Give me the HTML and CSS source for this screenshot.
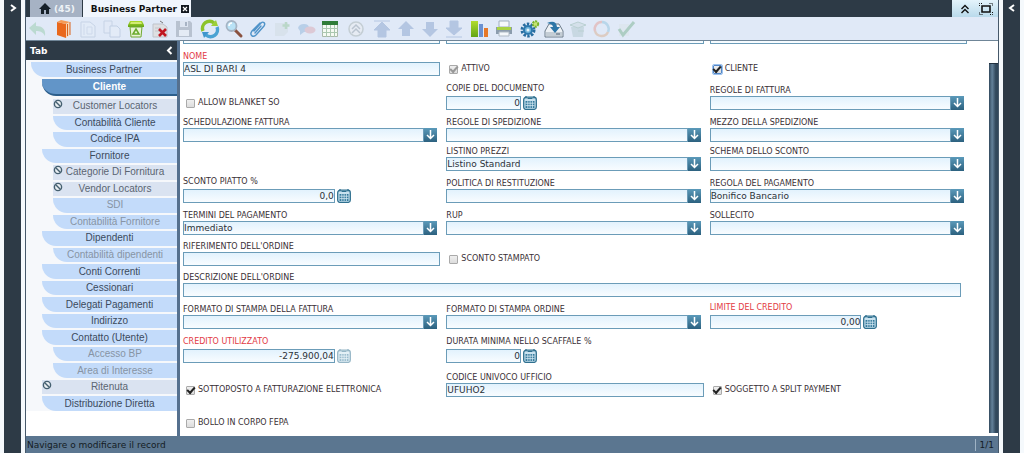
FILE: index.html
```html
<!DOCTYPE html>
<html lang="it">
<head>
<meta charset="utf-8">
<title>Business Partner</title>
<link rel="stylesheet" href="styles.css">
</head>
<body>
<svg class="defs" aria-hidden="true">
  <defs>
    <linearGradient id="green" x1="0" y1="0" x2="0" y2="1"><stop offset="0" stop-color="#b2dc2e"/><stop offset="1" stop-color="#62a516"/></linearGradient>
    <symbol id="down" viewBox="0 0 13 13"><path d="M6.500 2v8.500M3 7l3.500 3.500L10 7" fill="none" stroke="#fff" stroke-width="1.500"/></symbol>
    <symbol id="calc" viewBox="0 0 14 14"><rect x=".7" y="1.200" width="12.600" height="12.200" rx="2.500" fill="#c9e2ef" stroke="#2f708f" stroke-width="1.300"/><path d="M3 0v2.500M11 0v2.500M4.500 2.500h5" stroke="#2f708f" stroke-width="1.200"/><path d="M2.500 5h9v7h-9z" fill="#347a9c"/><path d="M2.500 7.200h9M2.500 9.600h9M4.800 5v7M7.100 5v7M9.400 5v7" stroke="#d5eaf4" stroke-width=".8"/></symbol>
    <symbol id="ban" viewBox="0 0 10 10"><circle cx="5" cy="5" r="3.600" fill="#e9eef2" stroke="#456070" stroke-width="1.400"/><path d="M2.500 2.500l5 5" stroke="#456070" stroke-width="1.400"/></symbol>
    <symbol id="arrow" viewBox="0 0 20 20"><path d="M10 2l8 8h-4v7H6v-7H2z" fill="#b4c6e2"/></symbol>
  </defs>
</svg>
<div class="app">
  <aside class="rail"><button aria-label="Apri pannello"><svg width="8" height="10" viewBox="0 0 8 10"><path d="M2 2l4 3-4 3" fill="none" stroke="#fff" stroke-width="2"/></svg></button></aside>
  <div class="main">
    <header class="tabs">
      <button class="tab home" aria-label="Home (45)"><svg width="12" height="11" viewBox="0 0 12 11"><path d="M6 0l6 6h-2v5H7V7H5v4H2V6H0z" fill="#17212a"/></svg>(45)</button>
      <button class="tab current">Business Partner <svg width="8" height="8" viewBox="0 0 8 8"><path d="M0 0h8v8H0z" fill="#14191f"/><path d="M2 2l4 4M6 2L2 6" stroke="#fff" stroke-width="1.200"/></svg></button>
      <div class="window-tools">
        <button aria-label="Comprimi"><svg width="10" height="10" viewBox="0 0 10 10"><path d="M1.500 5L5 1.500 8.500 5M1.500 9L5 5.500 8.500 9" fill="none" stroke="#111" stroke-width="1.400"/></svg></button>
        <button aria-label="Schermo intero"><svg width="14" height="12" viewBox="0 0 14 12"><path d="M3 3h8v6H3z" fill="none" stroke="#111" stroke-width="1.600"/><path d="M.5 3V.500h3M10.500.500h3V3M13.500 9v2.500h-3M3.500 11.500h-3V9" fill="none" stroke="#111" stroke-dasharray="1 1"/></svg></button>
      </div>
    </header>
    <div class="toolbar" role="toolbar" aria-label="Azioni">
      <div class="group"><button aria-label="Annulla" class="faint"><svg viewBox="0 0 20 20"><path d="M1 9l7-6v4c6 0 10 3 9 10-2-4-5-5-9-5v4z" fill="#86c49a"/></svg></button></div>
      <div class="group">
        <button aria-label="Guida"><svg viewBox="0 0 20 20"><path d="M3 3l9 2v14l-9-3z" fill="#e9681c"/><path d="M3 3l4-2 9 2-4 2z" fill="#f59a55"/><path d="M12 5l4-2v13l-4 3z" fill="#f7d5b5"/><path d="M13.500 5v12M16 3v13" stroke="#d9641f"/></svg></button>
        <button aria-label="Nuovo" class="faint"><svg viewBox="0 0 20 20"><path d="M3 3h9l5 4v11H3z" fill="#e6eef8" stroke="#a3b5cf"/><path d="M6 5v11M9 8h5v7H9z" fill="none" stroke="#b5c4da"/></svg></button>
        <button aria-label="Copia" class="faint"><svg viewBox="0 0 20 20"><path d="M2 2h8v12H2z" fill="#e3ebf6" stroke="#a3b5cf"/><path d="M8 7h7l3 3v8H8z" fill="#e9f0f9" stroke="#96abc9"/></svg></button>
        <button aria-label="Elimina"><svg viewBox="0 0 20 20"><path d="M2 6l2-4h12l2 4v2H2z" fill="url(#green)"/><path d="M5 3h10l1 2H4z" fill="#d2ec74"/><path d="M4 8h12l-1 10H5z" fill="#e9f4d6" stroke="#70a832"/><path d="M7 15l3-5 3 5z" fill="none" stroke="#69aa2b" stroke-width="1.500"/></svg></button>
        <button aria-label="Elimina selezione"><svg viewBox="0 0 20 20"><path d="M3 5h10l4 3v10H3z" fill="#dedfe2" stroke="#bfc3ca"/><path d="M10 2l3 2" stroke="#777"/><path d="M5 9h6M5 12h5" stroke="#c2c5ca"/><path d="M9 10l7 7M16 10l-7 7" stroke="#c01722" stroke-width="2.600"/></svg></button>
        <button aria-label="Salva" class="half"><svg viewBox="0 0 20 20"><path d="M2 2h14l2 2v14H2z" fill="#a8b2c0"/><path d="M6 2h8v6H6z" fill="#dce4ef"/><path d="M11 3h2v4h-2z" fill="#909daf"/><path d="M5 11h10v6H5z" fill="#e7edf5"/></svg></button>
      </div>
      <div class="group">
        <button aria-label="Aggiorna"><svg viewBox="0 0 20 20"><path d="M3 12A7 7 0 0 1 14 4" fill="none" stroke="#8cc32a" stroke-width="3.500"/><path d="M11 7l7 0-2-6z" fill="#9dcf38"/><path d="M17 8A7 7 0 0 1 6 16" fill="none" stroke="#4ba3d3" stroke-width="3.500"/><path d="M9 13H2l2 6z" fill="#3f96cd"/></svg></button>
        <button aria-label="Cerca"><svg viewBox="0 0 20 20"><path d="M11 11l6 6" stroke="#8a5240" stroke-width="3" stroke-linecap="round"/><circle cx="7.500" cy="7" r="5" fill="#b9e2f6" stroke="#a5b4c4" stroke-width="1.800"/><path d="M5 7q0-3 3-3" fill="none" stroke="#fff" stroke-width="1.500"/></svg></button>
        <button aria-label="Allegato"><svg viewBox="0 0 20 20"><path d="M6 12l7-8c2-2 5 0 3 3l-8 9c-3 3-7 0-4-4l8-8M13 7l-6 7" fill="none" stroke="#4f93c9" stroke-width="1.400" stroke-linecap="round"/></svg></button>
        <button aria-label="Nota" class="faint"><svg viewBox="0 0 20 20"><path d="M3 4h13v9l-4 4H3z" fill="#cdd9dc"/><path d="M14 3v7M10.500 6.500h7" stroke="#83bd85" stroke-width="2.500"/></svg></button>
        <button aria-label="Chat" class="faint"><svg viewBox="0 0 20 20"><path d="M2 9q1-4 6-4t5 4-5 4l-4 3v-4z" fill="#7fa9d4"/><ellipse cx="14" cy="11" rx="5.500" ry="3.500" fill="#d99aa3"/></svg></button>
        <button aria-label="Griglia"><svg viewBox="0 0 20 20"><path d="M2.500 2.500h15v15h-15z" fill="#f5faf3" stroke="#a9b9a9"/><path d="M2 2h16v4H2z" fill="#2f7c38"/><path d="M2 9.500h16M2 13.500h16M6.500 6v12M10.500 6v12M14.500 6v12" stroke="#aac7b0"/></svg></button>
      </div>
      <div class="group"><button aria-label="Cronologia" class="half"><svg viewBox="0 0 20 20"><circle cx="10" cy="10" r="7" fill="#e9edf2" stroke="#b9c3c6" stroke-width="1.500"/><path d="M6 10l4-4 4 4M6 14l4-4 4 4" fill="none" stroke="#aab5c0" stroke-width="1.500"/></svg></button></div>
      <div class="group">
        <button aria-label="Primo record"><svg viewBox="0 0 20 20"><path d="M2 2h16M10 3l8 8h-4v7H6v-7H2z" fill="#b4c6e2" stroke="#b4c6e2"/></svg></button>
        <button aria-label="Record precedente"><svg viewBox="0 0 20 20"><use href="#arrow"/></svg></button>
        <button aria-label="Record successivo"><svg viewBox="0 0 20 20"><use href="#arrow" transform="rotate(180 10 10)"/></svg></button>
        <button aria-label="Ultimo record"><svg viewBox="0 0 20 20"><path d="M2 18h16M10 16L2 9h4V2h8v7h4z" fill="#b4c6e2" stroke="#b4c6e2"/></svg></button>
      </div>
      <div class="group">
        <button aria-label="Report"><svg viewBox="0 0 20 20"><path d="M1 2h7v16H1z" fill="url(#green)"/><path d="M9 5h4v13H9z" fill="#6b91d1"/><path d="M14 9h4v9h-4z" fill="#e67828"/></svg></button>
        <button aria-label="Stampa"><svg viewBox="0 0 20 20"><path d="M5 2h10v6H5z" fill="#f5f8fb" stroke="#a0afbe"/><path d="M2 8h16v7H2z" fill="#8b9cad"/><path d="M3 8h14v3H3z" fill="#a8d243"/><path d="M5 13h10v4H5z" fill="#f4f8fb" stroke="#aebac5"/></svg></button>
      </div>
      <div class="group">
        <button aria-label="Processo"><svg viewBox="0 0 20 20"><circle cx="8" cy="11" r="6" fill="none" stroke="#286c9f" stroke-width="3" stroke-dasharray="2.400 1.370"/><circle cx="8" cy="11" r="4" fill="#71b4da" stroke="#2d78ad" stroke-width="2"/><circle cx="8" cy="11" r="1.500" fill="#e6f3fa"/><circle cx="15.500" cy="5" r="2.700" fill="#c6e374" stroke="#79b22b" stroke-width="2" stroke-dasharray="2 1"/></svg></button>
        <button aria-label="Archivia"><svg viewBox="0 0 20 20"><path d="M5 5h10l4 7v6H1v-6z" fill="#edf1f5" stroke="#6d7c8b"/><path d="M2 13h16v4H2z" fill="#c4cdd5"/><path d="M3 4q9-4 10 4h3l-5 6-5-6h3q0-3-6-4z" fill="#2e76a7"/><path d="M12 15h4" stroke="#526373"/></svg></button>
        <button aria-label="Esporta" class="faint"><svg viewBox="0 0 20 20"><path d="M3 8h13l-1 10H5z" fill="#a5bfc3"/><path d="M2 6l8-3 8 3-8 3zM10 12h6" fill="#c3d5d8" stroke="#82ac9c"/></svg></button>
        <button aria-label="Flusso" class="faint"><svg viewBox="0 0 20 20"><g fill="none" stroke-width="2.500"><path d="M3 12A7 7 0 0 1 10 3" stroke="#e58d7e"/><path d="M10 3a7 7 0 0 1 6 10" stroke="#7dbbd8"/><path d="M16 13A7 7 0 0 1 3 12" stroke="#d8a276"/></g></svg></button>
        <button aria-label="Conferma" class="faint"><svg viewBox="0 0 20 20"><path d="M3 5h10v12H3z" fill="#dbe3e5"/><path d="M3 10l4 6L18 3" fill="none" stroke="#62a578" stroke-width="3"/></svg></button>
      </div>
    </div>
    <div class="body">
      <nav class="side" aria-label="Tab">
        <div class="side-head"><span>Tab</span><button aria-label="Chiudi"><svg width="7" height="9" viewBox="0 0 7 9"><path d="M5.500 1L2 4.500 5.500 8" fill="none" stroke="#fff" stroke-width="2"/></svg></button></div>
        <div class="side-list">
          <a class="item top" href="#">Business Partner</a>
          <a class="item active" href="#" aria-current="page">Cliente</a>
          <div class="tree">
            <a class="item sub gray" href="#"><svg class="ban"><use href="#ban"/></svg>Customer Locators</a>
            <a class="item sub" href="#">Contabilità Cliente</a>
            <a class="item sub" href="#">Codice IPA</a>
            <a class="item" href="#">Fornitore</a>
            <a class="item sub gray" href="#"><svg class="ban"><use href="#ban"/></svg>Categorie Di Fornitura</a>
            <a class="item sub gray" href="#"><svg class="ban"><use href="#ban"/></svg>Vendor Locators</a>
            <a class="item sub off" href="#">SDI</a>
            <a class="item sub off" href="#">Contabilità Fornitore</a>
            <a class="item" href="#">Dipendenti</a>
            <a class="item sub off" href="#">Contabilità dipendenti</a>
            <a class="item" href="#">Conti Correnti</a>
            <a class="item" href="#">Cessionari</a>
            <a class="item" href="#">Delegati Pagamenti</a>
            <a class="item" href="#">Indirizzo</a>
            <a class="item" href="#">Contatto (Utente)</a>
            <a class="item sub off" href="#">Accesso BP</a>
            <a class="item sub off" href="#">Area di Interesse</a>
            <a class="item gray" href="#"><svg class="ban"><use href="#ban"/></svg>Ritenuta</a>
            <a class="item" href="#">Distribuzione Diretta</a>
          </div>
        </div>
      </nav>
      <form class="form">
        <div class="field"><input type="text" aria-label="Tenant" value="ASL BA"></div>
        <div class="field"><input type="text" aria-label="Organizzazione" value="ASL BA Istituzionale"></div>
        <div class="field"><input type="text" aria-label="Chiave di ricerca" value="20000906"></div>

        <div class="field"><label class="req" for="nome">Nome</label><input type="text" id="nome" value="ASL DI BARI 4"></div>
        <label class="check"><input type="checkbox" checked disabled>Attivo</label>
        <label class="check"><input type="checkbox" class="focus" checked>Cliente</label>

        <label class="check"><input type="checkbox">Allow Blanket SO</label>
        <div class="field num short"><label for="copie">Copie del documento</label><div class="line"><input type="text" id="copie" value="0"><button type="button" aria-label="Calcolatrice"><svg><use href="#calc"/></svg></button></div></div>
        <div class="field combo"><label for="rf">Regole di fattura</label><div class="line"><select id="rf"><option></option></select><span class="drop"><svg><use href="#down"/></svg></span></div></div>

        <div class="field combo"><label for="sf">Schedulazione fattura</label><div class="line"><select id="sf"><option></option></select><span class="drop"><svg><use href="#down"/></svg></span></div></div>
        <div class="field combo"><label for="rs">Regole di spedizione</label><div class="line"><select id="rs"><option></option></select><span class="drop"><svg><use href="#down"/></svg></span></div></div>
        <div class="field combo"><label for="ms">Mezzo della spedizione</label><div class="line"><select id="ms"><option></option></select><span class="drop"><svg><use href="#down"/></svg></span></div></div>

        <div class="field combo second"><label for="lp">Listino prezzi</label><div class="line"><select id="lp"><option>Listino Standard</option></select><span class="drop"><svg><use href="#down"/></svg></span></div></div>
        <div class="field combo"><label for="ss">Schema dello sconto</label><div class="line"><select id="ss"><option></option></select><span class="drop"><svg><use href="#down"/></svg></span></div></div>

        <div class="field num"><label for="sp">Sconto piatto %</label><div class="line"><input type="text" id="sp" value="0,0"><button type="button" aria-label="Calcolatrice"><svg><use href="#calc"/></svg></button></div></div>
        <div class="field combo"><label for="pr">Politica di restituzione</label><div class="line"><select id="pr"><option></option></select><span class="drop"><svg><use href="#down"/></svg></span></div></div>
        <div class="field combo"><label for="rp">Regola del pagamento</label><div class="line"><select id="rp"><option>Bonifico Bancario</option></select><span class="drop"><svg><use href="#down"/></svg></span></div></div>

        <div class="field combo"><label for="tp">Termini del pagamento</label><div class="line"><select id="tp"><option>Immediato</option></select><span class="drop"><svg><use href="#down"/></svg></span></div></div>
        <div class="field combo"><label for="rup">RUP</label><div class="line"><select id="rup"><option></option></select><span class="drop"><svg><use href="#down"/></svg></span></div></div>
        <div class="field combo"><label for="so">Sollecito</label><div class="line"><select id="so"><option></option></select><span class="drop"><svg><use href="#down"/></svg></span></div></div>

        <div class="field"><label for="ro">Riferimento dell'ordine</label><input type="text" id="ro"></div>
        <label class="check"><input type="checkbox">Sconto stampato</label>

        <div class="field wide"><label for="do">Descrizione dell'ordine</label><input type="text" id="do"></div>

        <div class="field combo"><label for="ff">Formato di stampa della fattura</label><div class="line"><select id="ff"><option></option></select><span class="drop"><svg><use href="#down"/></svg></span></div></div>
        <div class="field combo"><label for="fo">Formato di stampa ordine</label><div class="line"><select id="fo"><option></option></select><span class="drop"><svg><use href="#down"/></svg></span></div></div>
        <div class="field num"><label class="req" for="lc">Limite del credito</label><div class="line"><input type="text" id="lc" value="0,00"><button type="button" aria-label="Calcolatrice"><svg><use href="#calc"/></svg></button></div></div>

        <div class="field num"><label class="req" for="cu">Credito utilizzato</label><div class="line"><input type="text" id="cu" value="-275.900,04" readonly><button type="button" aria-label="Calcolatrice" disabled><svg><use href="#calc"/></svg></button></div></div>
        <div class="field num short"><label for="dm">Durata minima nello scaffale %</label><div class="line"><input type="text" id="dm" value="0"><button type="button" aria-label="Calcolatrice"><svg><use href="#calc"/></svg></button></div></div>

        <label class="check first"><input type="checkbox" checked>Sottoposto a fatturazione elettronica</label>
        <div class="field"><label for="cuu">Codice univoco ufficio</label><input type="text" id="cuu" value="UFUHO2"></div>
        <label class="check"><input type="checkbox" checked>Soggetto a split payment</label>

        <label class="check first"><input type="checkbox">Bollo in corpo FEPA</label>
      </form>
      <div class="scroll"><div class="thumb"></div></div>
    </div>
    <footer class="status"><span>Navigare o modificare il record</span><span class="count">1/1</span></footer>
  </div>
  <aside class="rail"><button aria-label="Apri pannello destro"><svg width="8" height="10" viewBox="0 0 8 10"><path d="M6 2L2 5l4 3" fill="none" stroke="#fff" stroke-width="2"/></svg></button></aside>
</div>
</body>
</html>
```
FILE: styles.css
```css
* { box-sizing: border-box; }
body { margin: 0; background: #fff; color: #333; font: 9px/12px "DejaVu Sans", sans-serif; }
button { border: 0; padding: 0; margin: 0; background: none; font: inherit; color: inherit; }
svg { display: block; }
.defs { position: absolute; width: 0; height: 0; }

.app { display: flex; gap: 4px; height: 100vh; padding: 0 4px; background: #f5f9fc; }
.rail { flex: 0 0 17px; background: #2d3a46; padding-top: 3px; }
.rail button { display: block; margin: 0 auto; }
.main { flex: 1; min-width: 0; display: flex; flex-direction: column; border: solid #46586a; border-width: 0 1px; }

.tabs { flex: 0 0 17px; display: flex; background: #2d3a46; padding-left: 4px; gap: 1px; font-weight: bold; }
.tab { display: flex; align-items: center; }
.home { background: #a6b2c4; color: #eef2f6; gap: 3px; padding: 0 7px 0 9px; }
.current { background: #f1f6fd; color: #111; gap: 4px; padding: 0 2px 0 8px; }
.window-tools { margin-left: auto; display: flex; align-items: center; gap: 9px; padding: 0 5px 0 8px; background: linear-gradient(#e4f3fb, #b9daeb); }

.toolbar { flex: 0 0 24px; display: flex; gap: 2px; background: #e0e9f7; border-bottom: 1px solid #6f8597; }
.group { display: flex; }
.group button { width: 24px; display: flex; justify-content: center; align-items: center; }
.group svg { width: 20px; height: 20px; }
.faint { opacity: .4; }
.half { opacity: .7; }

.body { flex: 1; min-height: 0; display: flex; background: #fff; }
.side { flex: 0 0 154px; border-right: 3px solid #55708e; overflow: hidden; }
.side-head { height: 19px; display: flex; justify-content: space-between; align-items: center; background: #2d3a46; color: #fff; font-weight: bold; padding: 0 4px 0 4px; }
.side-list { padding: 2px 0 0 5px; background: #f6f8fb; }
.item { position: relative; display: flex; align-items: center; justify-content: center; margin-left: 11px; background: #c3dbfa; color: #3b4a5c; border-bottom-left-radius: 14px 14px; text-decoration: none; font: 10px/14px "Liberation Sans", Arial, sans-serif; white-space: nowrap; }
.top { margin: 0 0 2px; height: 15px; }
.active { height: 17px; margin-bottom: 3px; background: #6295c8; border-bottom: 2px solid #2c5e8b; color: #fff; font-weight: bold; }
.tree { display: grid; grid-auto-rows: 1fr; gap: 2px; height: 312px; }
.sub { margin-left: 22px; }
.off { color: #8794a4; }
.gray { background: #dae3f1; color: #5b6572; border-radius: 0; }
.ban { position: absolute; left: 0; top: 0; width: 10px; height: 10px; }

.form { flex: 1; min-width: 0; overflow: hidden; padding-left: 3px; display: grid; grid-template-columns: repeat(3, 1fr); grid-template-rows: 3px 32px 34px 32px 29px 32px 32px 31px 31px 32px 34px 34px 33px; align-content: start; align-items: end; }
.field { padding-right: 6px; }
.combo { padding-right: 9px; }
.field label { display: block; height: 10px; }
.field label, .check { color: #3a3036; font-size: 8px; line-height: 10px; text-transform: uppercase; white-space: nowrap; }
.field label.req { color: #e23a44; }
.field input, .field select { display: block; width: 100%; height: 14px; margin: 0; padding: 0; border: 1px solid #6b9cb8; border-radius: 0; background: linear-gradient(#e2f2fd, #f8fcff); color: #2b3138; font: 9px/12px "DejaVu Sans", sans-serif; appearance: none; outline: 0; }
.line { display: flex; }
.line input, .line select { flex: 1; min-width: 0; }
.drop { flex: 0 0 13px; height: 14px; background: linear-gradient(#5b9aba, #2c617f); }
.drop svg { width: 13px; height: 13px; }
.num label { margin-bottom: 2px; }
.num .line { gap: 2px; }
.num input { flex: 0 0 59%; text-align: right; }
.short input { flex-basis: 29%; }
.num button svg { width: 14px; height: 14px; }
.num button:disabled { opacity: .5; }
.check { display: flex; align-items: center; gap: 3px; height: 14px; padding-left: 3px; }
.check input { appearance: none; display: grid; place-content: center; width: 9px; height: 9px; margin: 0; border: 1px solid #aaa; border-radius: 1px; background: linear-gradient(#efefef, #dcdcdc); }
.check input:checked::before { content: ""; width: 6px; height: 3px; border: solid #222; border-width: 0 0 2px 2px; transform: translateY(-1px) rotate(-48deg); }
.check input:disabled::before { border-color: #999; }
.check input.focus { border-color: #5488c8; outline: 1px solid #9dc2ee; }
.second { grid-column: 2; }
.first { grid-column: 1; }
.wide { grid-column: 1 / -1; padding-right: 12px; }
.scroll { flex: 0 0 25px; padding: 22px 0 3px 16px; }
.thumb { height: 100%; background: linear-gradient(90deg, #31485c, #63819a 35%, #31485c 75%); border-top: 1px solid #223140; }

.status { flex: 0 0 17px; display: flex; justify-content: space-between; align-items: center; background: #5b7690; color: #141c24; padding: 0 4px 0 1px; }
.count { border-left: 1px solid #9fb3c5; padding-left: 4px; }
```
